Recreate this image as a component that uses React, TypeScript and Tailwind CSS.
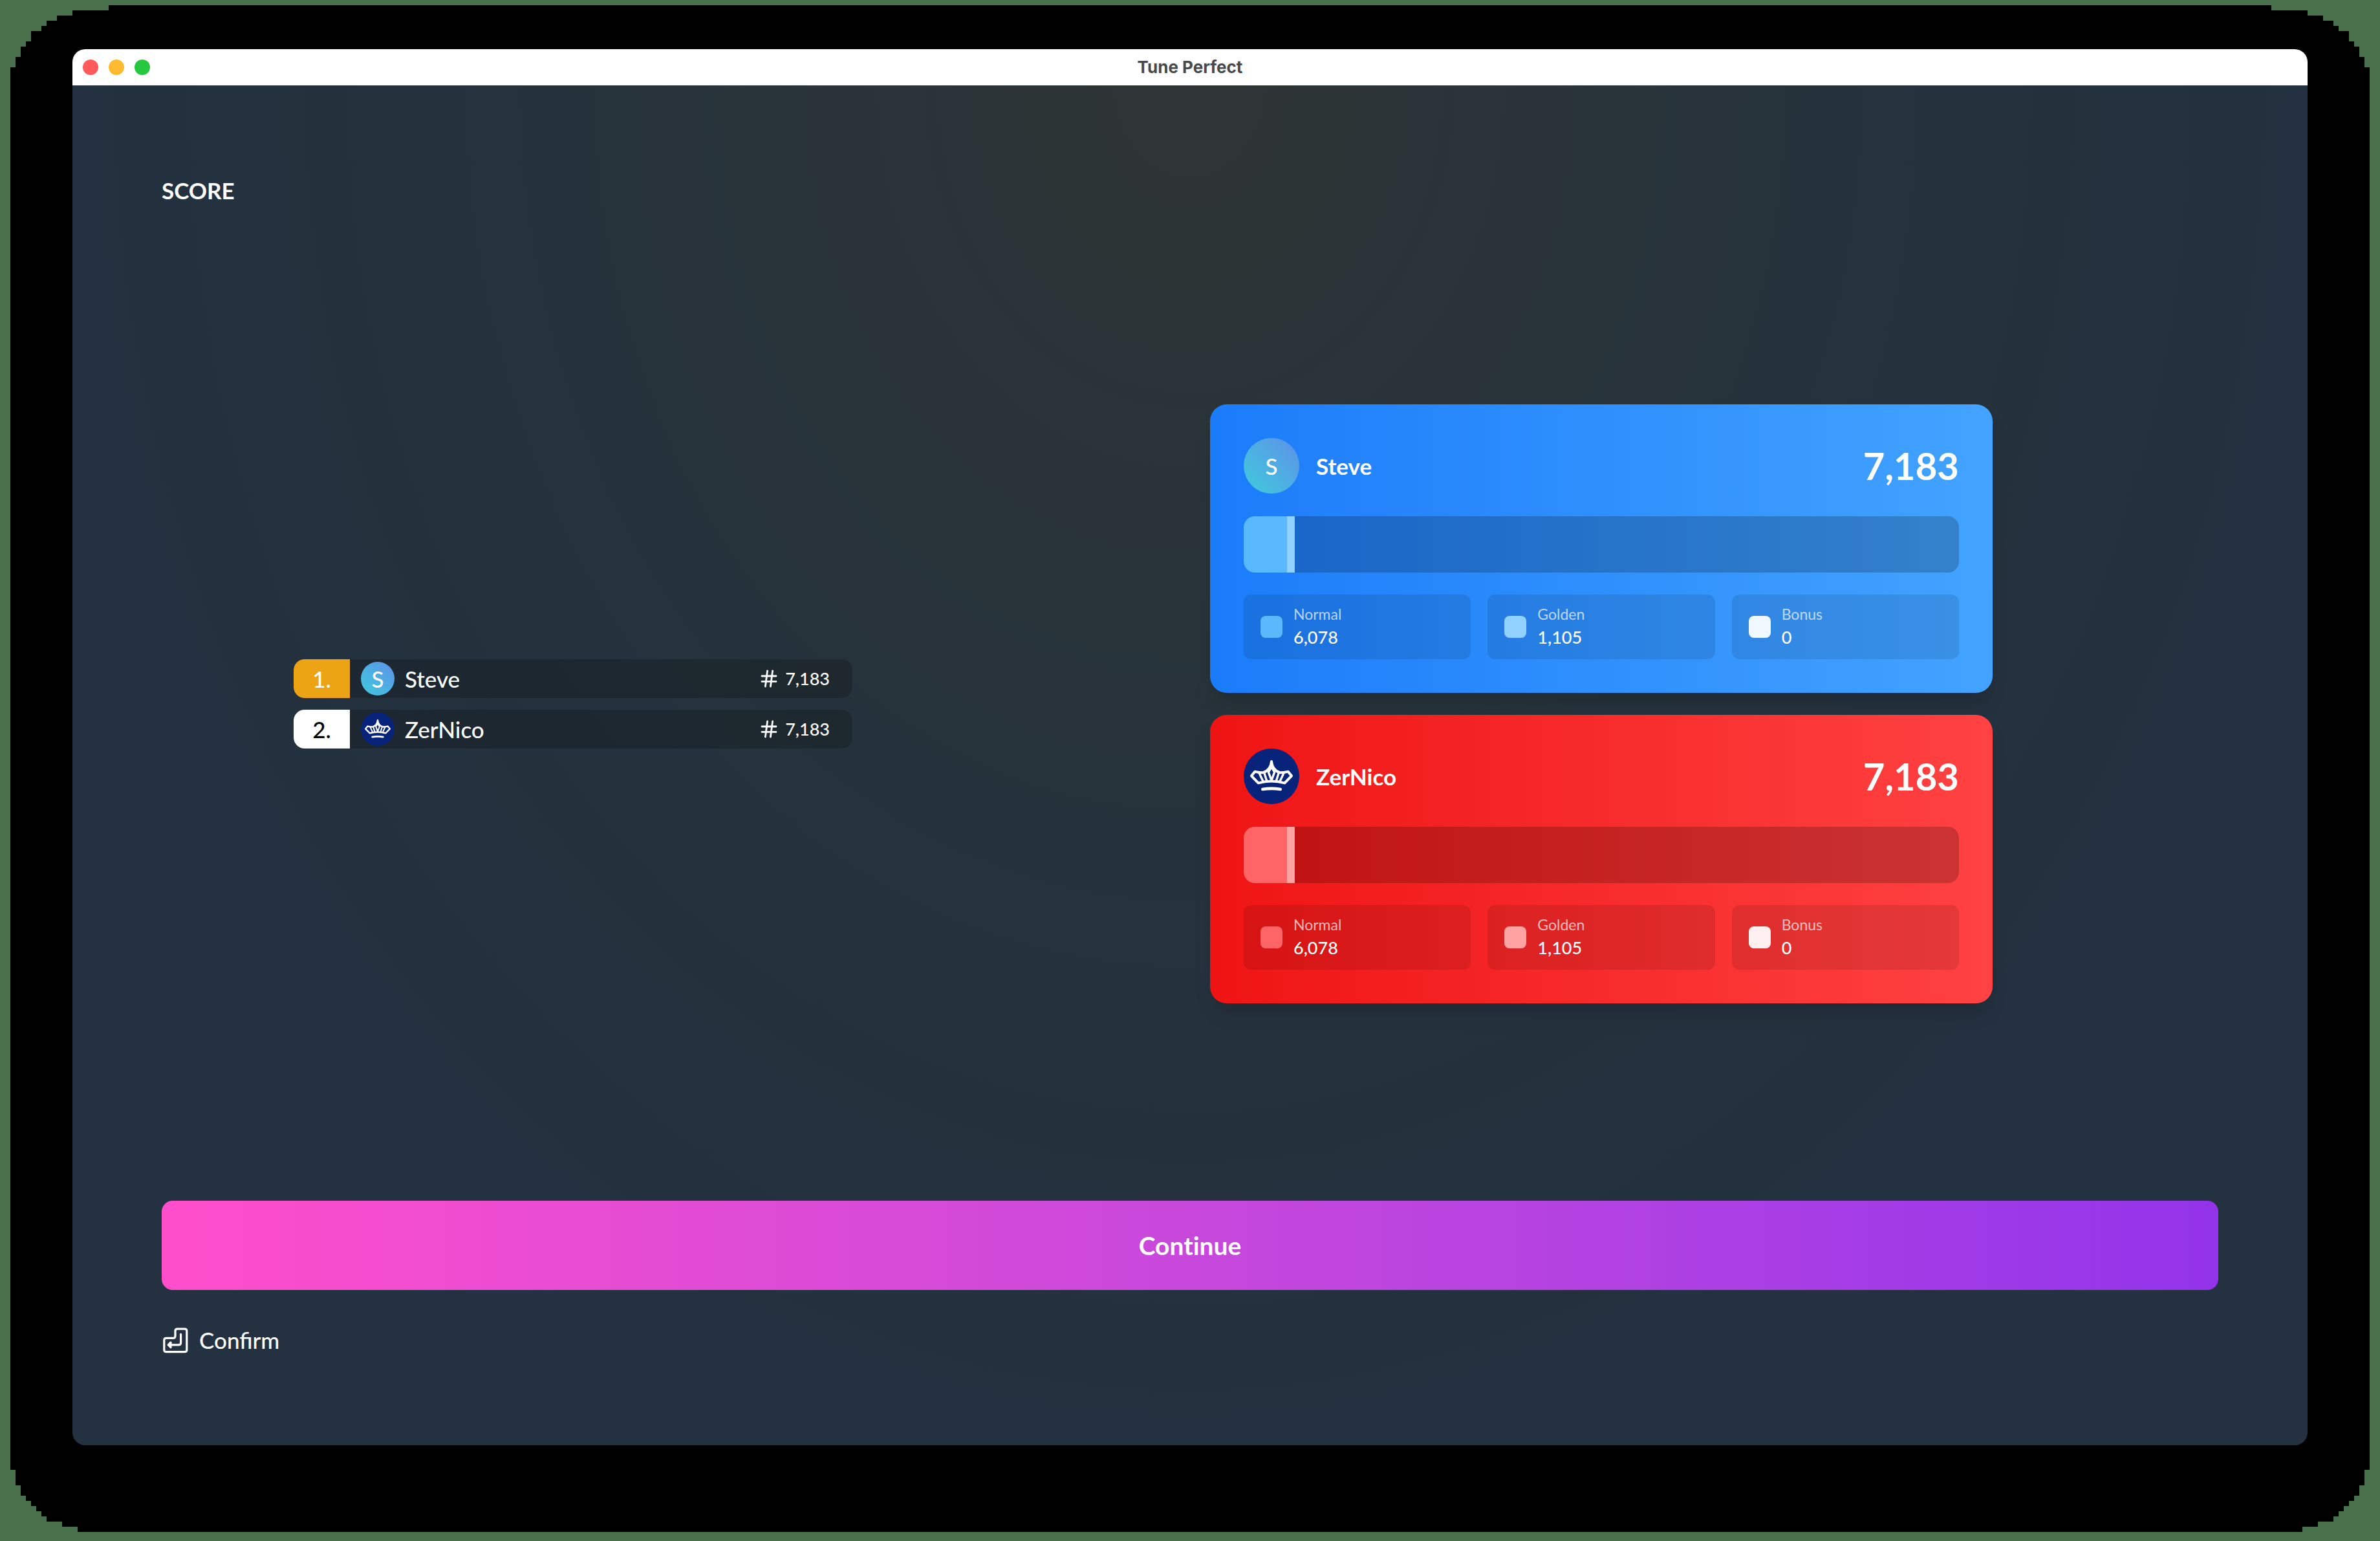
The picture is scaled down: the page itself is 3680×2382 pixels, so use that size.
import React from "react";

type Theme = "blue" | "red";

interface Player {
  name: string;
  theme: Theme;
  normal: number;
  golden: number;
  bonus: number;
}

const MAX_SCORE = 100000;

const players: Player[] = [
  { name: "Steve", theme: "blue", normal: 6078, golden: 1105, bonus: 0 },
  { name: "ZerNico", theme: "red", normal: 6078, golden: 1105, bonus: 0 },
];

const themes = {
  blue: {
    card: "from-[#1b7cfa] to-[#43a3ff]",
    normal: "bg-[#5ab8ff]",
    golden: "bg-[#90d1ff]",
    bonus: "bg-[#eff8ff]",
  },
  red: {
    card: "from-[#ef1414] to-[#ff4242]",
    normal: "bg-[#ff6467]",
    golden: "bg-[#ffa2a2]",
    bonus: "bg-[#fef0f0]",
  },
};

const total = (p: Player) => p.normal + p.golden + p.bonus;
const format = (n: number) => n.toLocaleString("en-US");

/* Stepped outline of the backdrop: [distance from side, distance from edge] */
const topSteps = [
  [152, 0], [96, 8], [72, 16], [56, 24], [48, 32], [32, 40],
  [24, 56], [16, 64], [8, 80], [0, 96],
];
const bottomSteps = [
  [104, 0], [80, 8], [56, 16], [48, 24], [40, 32], [32, 40],
  [24, 48], [16, 56], [8, 72], [0, 96],
];

function steppedOutline() {
  const corner = (steps: number[][], x: (n: number) => string, y: (n: number) => string) =>
    steps.flatMap(([sx, sy], i) =>
      i === 0
        ? [`${x(sx)} ${y(sy)}`]
        : [`${x(steps[i - 1][0])} ${y(sy)}`, `${x(sx)} ${y(sy)}`],
    );
  const near = (n: number) => `${n}px`;
  const far = (n: number) => `calc(100% - ${n}px)`;
  return `polygon(${[
    ...corner(topSteps, near, near).reverse(),
    ...corner(topSteps, far, near),
    ...corner(bottomSteps, far, far).reverse(),
    ...corner(bottomSteps, near, far),
  ].join(", ")})`;
}

function CrownIcon() {
  return (
    <svg viewBox="0 0 258 258" className="size-full" fill="none" stroke="#fff" strokeLinecap="round" strokeLinejoin="round" aria-hidden="true">
      <path strokeWidth="12" d="M129 60C127 84 118 102 92 111C79 114 66 110 52 107L36 127L68 160C108 149 150 149 190 160L222 127L206 107C192 110 179 114 166 111C140 102 131 84 129 60Z" />
      <path strokeWidth="10" d="M72 114L90 152M95 112L107 150M186 114L168 152M163 112L151 150M129 86L115 110L129 148L143 110Z" />
      <path strokeWidth="14" d="M88 189Q129 182 170 189" />
    </svg>
  );
}

function HashIcon() {
  return (
    <svg viewBox="0 0 26 28" className="h-7 w-[26px]" fill="none" stroke="currentColor" strokeWidth="2.8" strokeLinecap="round" aria-hidden="true">
      <path d="M10.6 2L7.4 26M18.6 2L15.4 26M2 10H24M2 18.4H24" />
    </svg>
  );
}

function EnterKeyIcon() {
  return (
    <svg viewBox="0 0 42 42" className="size-[42px]" fill="none" stroke="currentColor" strokeWidth="3.2" strokeLinecap="round" strokeLinejoin="round" aria-hidden="true">
      <path d="M24 4.2H35.6Q38.8 4.2 38.8 7.4V36.4Q38.8 39.6 35.6 39.6H7Q3.8 39.6 3.8 36.4V21.6Q3.8 18.4 7 18.4H17.8Q21 18.4 21 15.2V7.4Q21 4.2 24 4.2Z" />
      <path d="M29.6 12.4V25.4Q29.6 28.8 26.2 28.8H11" />
      <path fill="currentColor" d="M14 25L10.2 28.8L14 32.6Z" />
    </svg>
  );
}

function Avatar({ player, className }: { player: Player; className: string }) {
  if (player.theme === "red") {
    return (
      <div className={`${className} shrink-0 overflow-hidden rounded-full bg-[#08237a]`}>
        <CrownIcon />
      </div>
    );
  }
  return (
    <div className={`${className} flex shrink-0 items-center justify-center rounded-full bg-linear-to-tr/srgb from-[#3dccdc] to-[#5f90e8] text-[35px] leading-none font-medium`}>
      {player.name[0]}
    </div>
  );
}

function RankRow({ player, rank }: { player: Player; rank: number }) {
  const badge = rank === 1 ? "bg-[#eca414] text-white" : "bg-white text-black";
  return (
    <li className="flex h-[60px] items-center overflow-hidden rounded-[17px] bg-black/20">
      <div className={`${badge} flex h-full w-[87px] items-center justify-center text-[35px] font-medium`}>{rank}.</div>
      <Avatar player={player} className="ml-[17px] size-[52px]" />
      <span className="ml-4 flex-1 text-[35px] font-medium">{player.name}</span>
      <span className="flex items-center gap-3 pr-[35px] text-[27px] font-medium">
        <HashIcon />
        {format(total(player))}
      </span>
    </li>
  );
}

function Stat({ label, value, swatch }: { label: string; value: number; swatch: string }) {
  return (
    <div className="flex h-[100px] items-center gap-[17px] rounded-xl bg-black/10 px-[26px]">
      <div className={`${swatch} size-[34px] rounded-lg`} />
      <dl className="flex flex-col pb-0.5">
        <dt className="text-[23px] leading-[34px] text-white/70">{label}</dt>
        <dd className="text-[27px] leading-[38px] font-medium">{format(value)}</dd>
      </dl>
    </div>
  );
}

function ScoreCard({ player }: { player: Player }) {
  const theme = themes[player.theme];
  return (
    <article className={`${theme.card} rounded-[26px] bg-linear-to-r/srgb p-[52px] shadow-[0_20px_30px_-6px_rgba(0,0,0,0.15)]`}>
      <header className="flex h-[86px] items-center">
        <Avatar player={player} className="size-[86px]" />
        <h2 className="ml-[26px] flex-1 text-[35px] font-bold">{player.name}</h2>
        <span className="text-[58px] leading-none font-bold">{format(total(player))}</span>
      </header>
      <div
        role="progressbar"
        aria-label={`${player.name} score`}
        aria-valuenow={total(player)}
        aria-valuemax={MAX_SCORE}
        className="mt-[35px] flex h-[87px] overflow-hidden rounded-[17px] bg-black/20"
      >
        <div className={theme.normal} style={{ width: `${(player.normal / MAX_SCORE) * 100}%` }} />
        <div className={theme.golden} style={{ width: `${(player.golden / MAX_SCORE) * 100}%` }} />
      </div>
      <div className="mt-[34px] grid grid-cols-3 gap-[26px]">
        <Stat label="Normal" value={player.normal} swatch={theme.normal} />
        <Stat label="Golden" value={player.golden} swatch={theme.golden} />
        <Stat label="Bonus" value={player.bonus} swatch={theme.bonus} />
      </div>
    </article>
  );
}

export default function App() {
  return (
    <div className="flex min-h-screen flex-col bg-[#49724c] px-4 pt-2 pb-3.5 font-['Lato',sans-serif] text-white">
      <div className="flex flex-1 flex-col bg-black px-24 pt-[68px] pb-[134px]" style={{ clipPath: steppedOutline() }}>
        <div className="flex flex-1 flex-col overflow-hidden rounded-[20px]">
          <div className="grid h-14 grid-cols-[1fr_auto_1fr] items-center bg-white px-4">
            <div className="flex gap-4">
              <button type="button" aria-label="Close" className="size-6 rounded-full bg-[#ff5a5c]" />
              <button type="button" aria-label="Minimize" className="size-6 rounded-full bg-[#febb30]" />
              <button type="button" aria-label="Zoom" className="size-6 rounded-full bg-[#26c840]" />
            </div>
            <span className="font-['Inter',sans-serif] text-[26px] leading-none font-bold text-[#48494a]">Tune Perfect</span>
          </div>
          <main className="flex flex-1 flex-col bg-[radial-gradient(ellipse_at_top,#303434_0%,#2a3439_18%,#26323b_40%,#233140_70%)] p-[138px]">
            <h1 className="mb-0.5 text-[35px] leading-[48px] font-bold">SCORE</h1>
            <div className="grid flex-1 grid-cols-[2fr_3fr] items-center justify-items-center">
              <ol className="flex w-full max-w-[864px] flex-col gap-[18px]">
                {players.map((p, i) => (
                  <RankRow key={p.name} player={p} rank={i + 1} />
                ))}
              </ol>
              <section className="flex w-full max-w-[1210px] flex-col gap-[34px]">
                {players.map((p) => (
                  <ScoreCard key={p.name} player={p} />
                ))}
              </section>
            </div>
            <button type="button" className="h-[138px] rounded-[17px] bg-linear-to-r from-[#ff4dcb] to-[#9333ea] text-[39px] font-bold [font-variant-ligatures:none]">
              Continue
            </button>
            <footer className="mt-[52px] flex h-[50px] items-center gap-4 text-[35px] leading-[48px] font-medium">
              <EnterKeyIcon />
              <span>Confirm</span>
            </footer>
          </main>
        </div>
      </div>
    </div>
  );
}
